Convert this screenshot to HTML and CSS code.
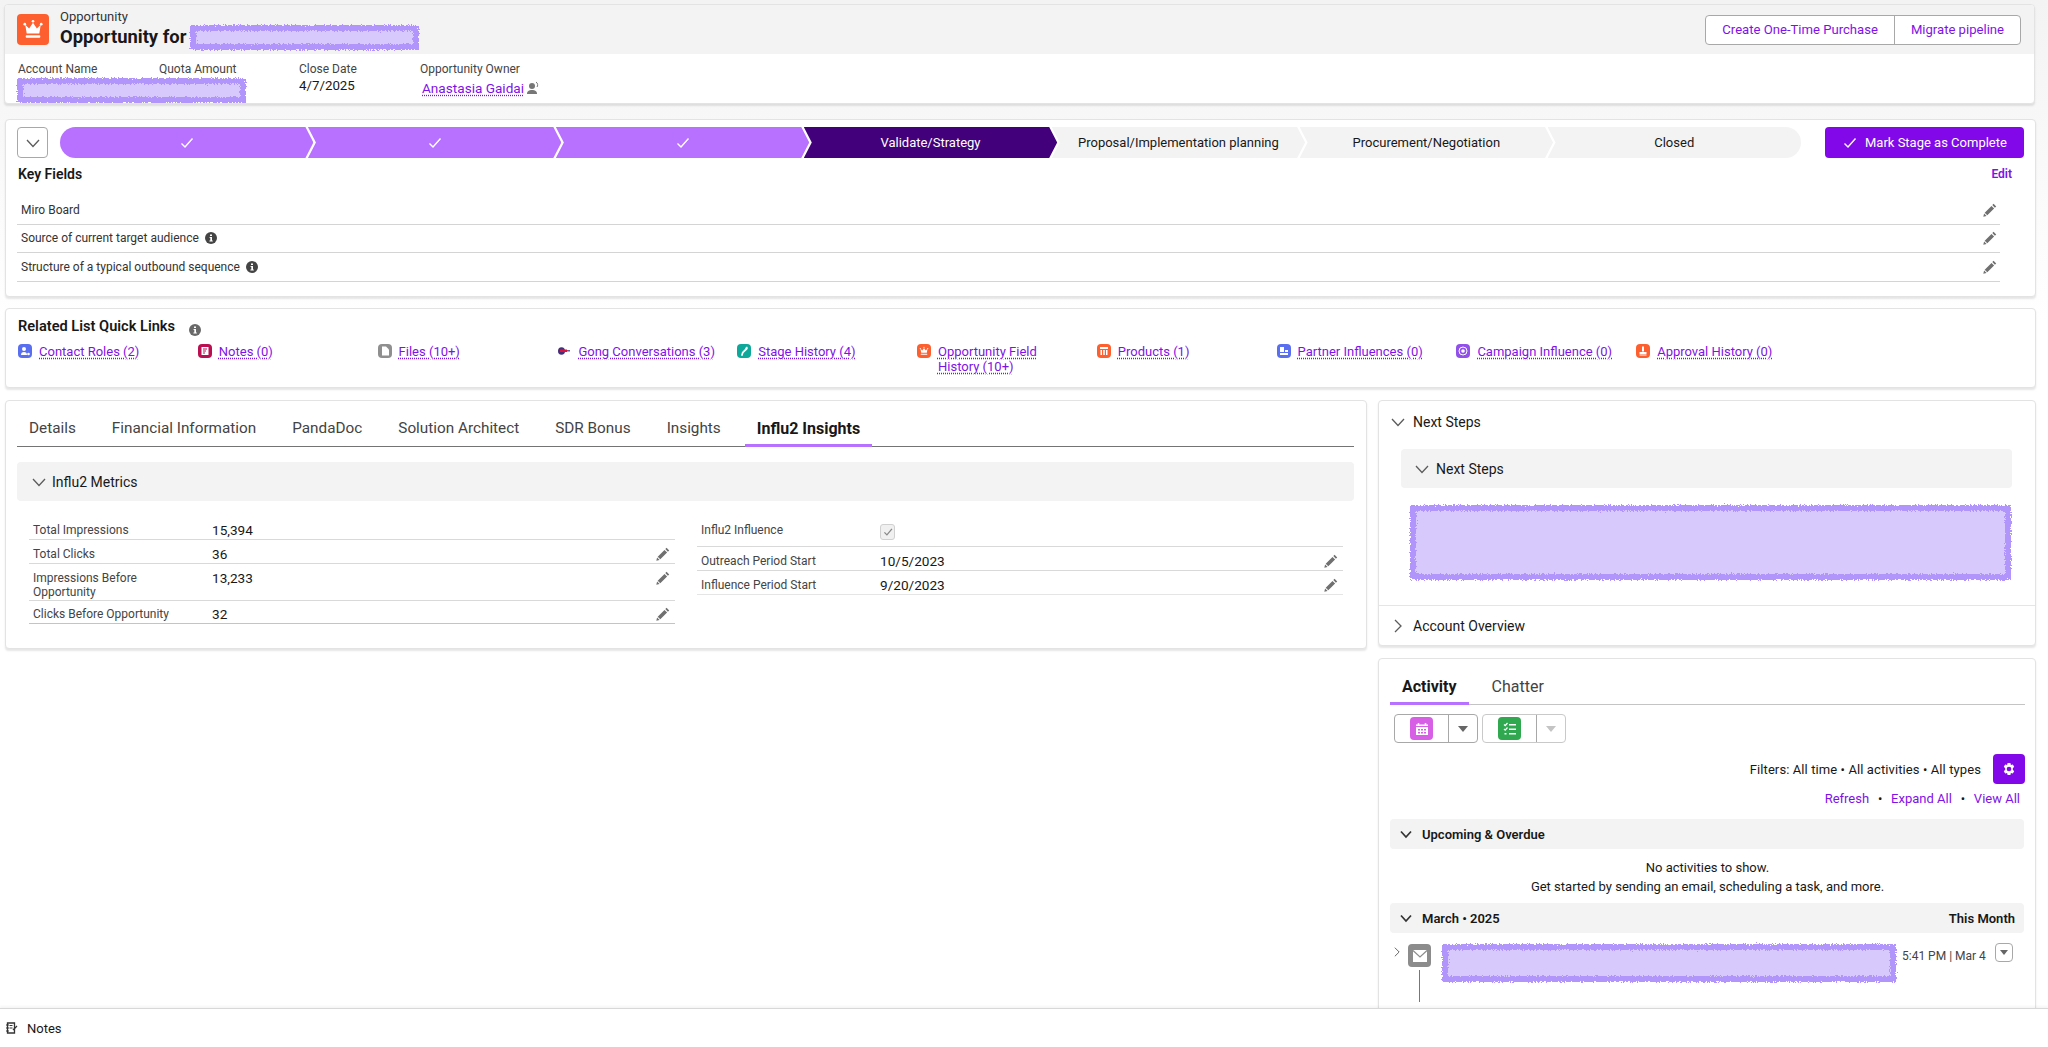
FILE: index.html
```html
<!DOCTYPE html>
<html lang="en">
<head>
  <meta charset="UTF-8">
  <title>Opportunity</title>
  <link rel="stylesheet" href="styles.css">
</head>
<body>
  <svg class="defs" width="0" height="0">
    <defs>
      <filter id="rough" x="-5%" y="-20%" width="110%" height="140%">
        <feTurbulence type="fractalNoise" baseFrequency="0.7" numOctaves="2" seed="4"/>
        <feDisplacementMap in="SourceGraphic" scale="5"/>
      </filter>
      <symbol id="pencil" viewBox="0 0 14 14">
        <path d="M10.6 .8l2.6 2.6-1.3 1.3-2.6-2.6zM8.5 2.9l2.6 2.6-6.8 6.8-2.6-2.6zM1.1 10.4l2.5 2.5-3.3.8z" fill="#707070"/>
      </symbol>
      <symbol id="chev-down" viewBox="0 0 14 14">
        <path d="M1 4l6 6.5L13 4" fill="none" stroke="#5c5c5c" stroke-width="1.3"/>
      </symbol>
      <symbol id="chev-bold" viewBox="0 0 14 14">
        <path d="M2 4.5l5 5.5 5-5.5" fill="none" stroke="#333" stroke-width="1.7"/>
      </symbol>
      <symbol id="chev-right" viewBox="0 0 14 14">
        <path d="M4 1l6 6-6 6" fill="none" stroke="#5c5c5c" stroke-width="1.3"/>
      </symbol>
      <symbol id="check" viewBox="0 0 14 14">
        <path d="M1.5 7.5l3.5 3.5 7.5-8.5" fill="none" stroke="#fff" stroke-width="1.4"/>
      </symbol>
      <symbol id="info" viewBox="0 0 12 12">
        <circle cx="6" cy="6" r="6" fill="#444"/>
        <path d="M5 2.5h2v1.6H5zM4.6 5h2.4v3.4h.8v1H4.4v-1h.9V6h-.7z" fill="#fff"/>
      </symbol>
      <symbol id="crown" viewBox="0 0 32 32">
        <path d="M8 11l4 4 4-6 4 6 4-4-1.5 9h-13z" fill="#fff"/>
        <circle cx="7.5" cy="10.5" r="1.4" fill="#fff"/>
        <circle cx="16" cy="7.5" r="1.4" fill="#fff"/>
        <circle cx="24.5" cy="10.5" r="1.4" fill="#fff"/>
        <rect x="8.5" y="22" width="15" height="2.6" rx=".8" fill="#fff"/>
      </symbol>
    </defs>
  </svg>

  <main class="page">
    <section class="card record-head">
      <div class="record-top">
        <span class="record-icon"><svg width="32" height="31"><use href="#crown"/></svg></span>
        <div class="record-title">
          <div class="record-type">Opportunity</div>
          <h1>Opportunity for <span class="redact redact-title"></span></h1>
        </div>
        <div class="btn-group">
          <a class="btn">Create One-Time Purchase</a>
          <a class="btn">Migrate pipeline</a>
        </div>
      </div>
      <div class="highlights">
        <div class="hl hl-account">
          <div class="hl-label">Account Name</div>
          <div class="redact redact-account"></div>
        </div>
        <div class="hl hl-quota"><div class="hl-label">Quota Amount</div></div>
        <div class="hl hl-close">
          <div class="hl-label">Close Date</div>
          <div class="hl-value">4/7/2025</div>
        </div>
        <div class="hl">
          <div class="hl-label">Opportunity Owner</div>
          <div class="hl-owner">
            <a class="link">Anastasia Gaidai</a>
            <svg width="13" height="14" viewBox="0 0 13 14"><circle cx="5" cy="5" r="3" fill="#777"/><path d="M0 13c0-3 2-4 5-4s5 1 5 4z" fill="#777"/><path d="M9 1c2 1 2 4 1 5" fill="none" stroke="#777"/></svg>
          </div>
        </div>
      </div>
    </section>

    <section class="card key-card">
      <div class="path-row">
        <button class="path-toggle"><svg width="14" height="14"><use href="#chev-down"/></svg></button>
        <ol class="path">
          <li class="step done"><svg width="14" height="14"><use href="#check"/></svg></li>
          <li class="step done"><svg width="14" height="14"><use href="#check"/></svg></li>
          <li class="step done"><svg width="14" height="14"><use href="#check"/></svg></li>
          <li class="step current">Validate/Strategy</li>
          <li class="step">Proposal/Implementation planning</li>
          <li class="step">Procurement/Negotiation</li>
          <li class="step">Closed</li>
        </ol>
        <button class="btn-complete"><svg width="14" height="14"><use href="#check"/></svg>Mark Stage as Complete</button>
      </div>
      <div class="key-head">
        <h2>Key Fields</h2>
        <a class="key-edit">Edit</a>
      </div>
      <div class="key-list">
        <div class="key-row"><span>Miro Board</span><svg class="pen" width="14" height="14"><use href="#pencil"/></svg></div>
        <div class="key-row"><span>Source of current target audience</span><svg class="tip" width="12" height="12"><use href="#info"/></svg><svg class="pen" width="14" height="14"><use href="#pencil"/></svg></div>
        <div class="key-row"><span>Structure of a typical outbound sequence</span><svg class="tip" width="12" height="12"><use href="#info"/></svg><svg class="pen" width="14" height="14"><use href="#pencil"/></svg></div>
      </div>
    </section>

    <section class="card quick-card">
      <h2>Related List Quick Links <svg class="quick-info" width="12" height="12"><use href="#info"/></svg></h2>
      <ul class="quick-links">
        <li><span class="qi qi-contact"><svg viewBox="0 0 14 14"><circle cx="6" cy="5" r="2" fill="#fff"/><path d="M3 11c0-2 1-3 3-3s3 1 3 3z" fill="#fff"/><circle cx="10.500" cy="10" r="1.300" fill="#fff"/></svg></span><a class="link">Contact Roles (2)</a></li>
        <li><span class="qi qi-notes"><svg viewBox="0 0 14 14"><rect x="3.500" y="3" width="7" height="8" fill="#fff"/><path d="M5 5h4M5 7h3M5 9h2" stroke="#ba0f50"/></svg></span><a class="link">Notes (0)</a></li>
        <li><span class="qi qi-files"><svg viewBox="0 0 14 14"><path d="M4 2.500h4l3 3V11.500H4z" fill="#fff"/></svg></span><a class="link">Files (10+)</a></li>
        <li><span class="qi qi-gong"><svg viewBox="0 0 14 14"><ellipse cx="4.500" cy="7" rx="3.500" ry="3.800" fill="#43307a"/><rect x="3" y="5.500" width="7" height="2.500" fill="#d8123c"/><rect x="10" y="6" width="3" height="1.500" fill="#6a5aa0"/></svg></span><a class="link">Gong Conversations (3)</a></li>
        <li><span class="qi qi-stage"><svg viewBox="0 0 14 14"><path d="M10 2.500c1 1 1 2.500 0 3.200L6.500 9l-1 3-1.500-.5L5 8l3-3c.3-1 .8-2 2-2.500z" fill="#fff"/></svg></span><a class="link">Stage History (4)</a></li>
        <li><span class="qi qi-orange"><svg viewBox="0 0 32 32"><use href="#crown"/></svg></span><a class="link">Opportunity Field History (10+)</a></li>
        <li><span class="qi qi-orange"><svg viewBox="0 0 14 14"><path d="M3 3h8v2H3zM3.500 6h1.500v5H3.500zM6.200 6h1.600v5H6.200zM9 6h1.500v5H9z" fill="#fff"/></svg></span><a class="link">Products (1)</a></li>
        <li><span class="qi qi-partner"><svg viewBox="0 0 14 14"><rect x="3" y="3" width="4" height="5" fill="#fff"/><rect x="3" y="9" width="8" height="2" fill="#fff"/><rect x="8" y="6" width="3" height="2" fill="#fff"/></svg></span><a class="link">Partner Influences (0)</a></li>
        <li><span class="qi qi-campaign"><svg viewBox="0 0 14 14"><circle cx="7" cy="7" r="4" fill="none" stroke="#fff"/><circle cx="7" cy="7" r="1.800" fill="#fff"/></svg></span><a class="link">Campaign Influence (0)</a></li>
        <li><span class="qi qi-orange"><svg viewBox="0 0 14 14"><rect x="6" y="2.500" width="2" height="5" fill="#fff"/><path d="M3.500 8h7v2h-7z" fill="#fff"/><rect x="3.500" y="10.500" width="7" height="1" fill="#fff"/></svg></span><a class="link">Approval History (0)</a></li>
      </ul>
    </section>

    <div class="columns">
      <section class="card detail-card">
        <ul class="tabs">
          <li class="tab">Details</li>
          <li class="tab">Financial Information</li>
          <li class="tab">PandaDoc</li>
          <li class="tab">Solution Architect</li>
          <li class="tab">SDR Bonus</li>
          <li class="tab">Insights</li>
          <li class="tab active">Influ2 Insights</li>
        </ul>
        <div class="section-bar"><svg width="14" height="14"><use href="#chev-down"/></svg>Influ2 Metrics</div>
        <div class="fields">
          <div class="field-col">
            <div class="field"><span class="f-label">Total Impressions</span><span class="f-value">15,394</span></div>
            <div class="field"><span class="f-label">Total Clicks</span><span class="f-value">36</span><svg class="pen" width="14" height="14"><use href="#pencil"/></svg></div>
            <div class="field"><span class="f-label">Impressions Before Opportunity</span><span class="f-value">13,233</span><svg class="pen" width="14" height="14"><use href="#pencil"/></svg></div>
            <div class="field last"><span class="f-label">Clicks Before Opportunity</span><span class="f-value">32</span><svg class="pen" width="14" height="14"><use href="#pencil"/></svg></div>
          </div>
          <div class="field-col">
            <div class="field field-check"><span class="f-label">Influ2 Influence</span><span class="checkbox"><svg width="10" height="10" viewBox="0 0 14 14"><path d="M2 7.500l3.500 3.500 7-8.500" fill="none" stroke="#888" stroke-width="1.800"/></svg></span></div>
            <div class="field"><span class="f-label">Outreach Period Start</span><span class="f-value">10/5/2023</span><svg class="pen" width="14" height="14"><use href="#pencil"/></svg></div>
            <div class="field light"><span class="f-label">Influence Period Start</span><span class="f-value">9/20/2023</span><svg class="pen" width="14" height="14"><use href="#pencil"/></svg></div>
          </div>
        </div>
      </section>

      <div class="side">
        <section class="card steps-card">
          <div class="acc-head"><svg width="14" height="14"><use href="#chev-down"/></svg>Next Steps</div>
          <div class="section-bar inner"><svg width="14" height="14"><use href="#chev-down"/></svg>Next Steps</div>
          <div class="redact redact-steps"></div>
          <div class="acc-head acc-last"><svg width="14" height="14"><use href="#chev-right"/></svg>Account Overview</div>
        </section>

        <section class="card activity-card">
          <ul class="tabs">
            <li class="tab">Activity</li>
            <li class="tab">Chatter</li>
          </ul>
          <div class="publisher">
            <div class="pub-group">
              <span class="pub-main"><span class="pub-icon pub-event"><svg width="16" height="16" viewBox="0 0 16 16"><path d="M2 5V3.500h12V5zM2 6h12v8H2z" fill="#fff"/><path d="M4.500 2v2M11.500 2v2" stroke="#fff" stroke-width="1.500"/><path d="M4 8h2v1.500H4zM7 8h2v1.500H7zM10 8h2v1.500h-2zM4 11h2v1.500H4zM7 11h2v1.500H7zM10 11h2v1.500h-2z" fill="#d75fe6"/></svg></span></span>
              <span class="pub-caret"></span>
            </div>
            <div class="pub-group pub-off">
              <span class="pub-main"><span class="pub-icon pub-task"><svg width="16" height="16" viewBox="0 0 16 16"><path d="M2 3.500l1.200 1.200L5.500 2M2 8l1.200 1.200L5.500 6.500" fill="none" stroke="#fff" stroke-width="1.200"/><path d="M7 3h7v1.500H7zM7 7.500h7V9H7zM7 12h7v1.500H7zM2.500 12h2v1.500h-2z" fill="#fff"/></svg></span></span>
              <span class="pub-caret"></span>
            </div>
          </div>
          <div class="filters">
            <span>Filters: All time • All activities • All types</span>
            <button class="gear"><svg width="14" height="14" viewBox="0 0 14 14"><path d="M5.600 1h2.800l.5 1.900 1.900-.5 1.400 2.400-1.400 1.400v1.600l1.400 1.400-1.400 2.400-1.900-.5L8.400 13H5.600l-.5-1.900-1.900.5-1.400-2.400 1.400-1.400V6.200L1.800 4.800l1.400-2.400 1.900.5z" fill="#fff"/><circle cx="7" cy="7" r="2.300" fill="#8208ea"/></svg></button>
          </div>
          <div class="activity-links">
            <a>Refresh</a><span class="sep">•</span><a>Expand All</a><span class="sep">•</span><a>View All</a>
          </div>
          <div class="group-bar"><svg width="14" height="14"><use href="#chev-bold"/></svg>Upcoming &amp; Overdue</div>
          <div class="empty">
            <p>No activities to show.</p>
            <p>Get started by sending an email, scheduling a task, and more.</p>
          </div>
          <div class="group-bar"><svg width="14" height="14"><use href="#chev-bold"/></svg>March • 2025<span class="group-right">This Month</span></div>
          <div class="timeline">
            <svg class="tl-chev" width="10" height="14"><use href="#chev-right"/></svg>
            <div class="tl-rail">
              <span class="tl-icon"><svg width="16" height="14" viewBox="0 0 16 14"><path d="M1 1h14v12H1z" fill="#fff"/><path d="M1 1.500l7 6.500 7-6.500" fill="none" stroke="#8c8c8c" stroke-width="1.200"/></svg></span>
              <span class="tl-line"></span>
            </div>
            <div class="redact redact-mail"></div>
            <span class="tl-time">5:41 PM | Mar 4</span>
            <span class="tl-menu"><span class="pub-caret-mark"></span></span>
          </div>
        </section>
      </div>
    </div>
  </main>

  <footer class="dock">
    <svg width="12" height="12" viewBox="0 0 12 12"><path d="M1.500 1h7v10h-7z" fill="none" stroke="#333" stroke-width="1.300"/><path d="M0 3h3M0 6h3M0 9h3M3.500 3.500h3M3.500 6h3" stroke="#333"/><path d="M7 8l4-4" stroke="#333" stroke-width="1.300"/></svg>
    <span>Notes</span>
  </footer>
</body>
</html>
```

FILE: styles.css
```css
* {
  box-sizing: border-box;
}

html,
body {
  margin: 0;
  height: 100%;
  overflow: hidden;
}

body {
  display: flex;
  flex-direction: column;
  font-family: Roboto, "Liberation Sans", sans-serif;
  font-size: 13px;
  color: #181818;
  background: linear-gradient(#f3f3f3 0, #fff 320px);
}

h1,
h2,
p,
ul,
ol {
  margin: 0;
  padding: 0;
  list-style: none;
}

button {
  font-family: inherit;
  cursor: pointer;
}

.defs {
  position: absolute;
}

.page {
  flex: 1;
  overflow: hidden;
  padding: 4px 12px 0 5px;
}

.card {
  background: #fff;
  border: 1px solid #e3e3e3;
  border-radius: 4px;
  box-shadow: 0 2px 2px rgba(0, 0, 0, 0.1);
}

.link {
  color: #7f12e6;
  text-decoration: underline dotted;
  text-underline-offset: 2px;
}

.redact {
  background: #d7c9fc;
  border: 6px solid #b195fb;
  filter: url(#rough);
}

.pen {
  flex: none;
  margin-left: auto;
}

/* record header */
.record-head {
  margin: 0 1px 0 -1px;
  height: 100px;
  overflow: hidden;
}

.record-top {
  display: flex;
  align-items: center;
  height: 49px;
  padding: 0 13px 0 12px;
  background: #f3f3f3;
}

.record-icon {
  display: block;
  width: 32px;
  height: 31px;
  margin-right: 11px;
  border-radius: 4px;
  background: #fd5f2e;
}

.record-title {
  margin-top: -1px;
}

.record-type {
  font-size: 13px;
  line-height: 16px;
  color: #333;
}

.record-title h1 {
  display: flex;
  align-items: center;
  gap: 4px;
  font-size: 18.400px;
  font-weight: 700;
  line-height: 20px;
}

.redact-title {
  display: block;
  width: 229px;
  height: 25px;
}

.btn-group {
  display: flex;
  margin-left: auto;
  height: 30px;
  background: #fff;
  border: 1px solid #a8a8a8;
  border-radius: 4px;
}

.btn {
  padding: 0 16px;
  font-size: 13.100px;
  line-height: 28px;
  color: #7f12e6;
}

.btn + .btn {
  border-left: 1px solid #a8a8a8;
}

.highlights {
  display: flex;
  padding: 8px 0 0 13px;
}

.hl-account {
  width: 141px;
}

.hl-quota {
  width: 140px;
}

.hl-close {
  width: 121px;
}

.hl-label {
  font-size: 12px;
  line-height: 14px;
  color: #444;
}

.hl-value {
  margin-top: 1px;
  font-size: 13.300px;
  line-height: 17px;
}

.redact-account {
  position: relative;
  width: 229px;
  height: 25px;
  margin-top: 2px;
  margin-left: -1px;
}

.hl-owner {
  display: flex;
  align-items: center;
  gap: 3px;
  margin: 3px 0 0 2px;
  font-size: 13.600px;
  line-height: 18px;
}

/* path and key fields */
.key-card {
  margin-top: 15px;
  height: 178px;
  padding: 7px 11px 0;
}

.path-row {
  display: flex;
  align-items: center;
  height: 31px;
}

.path-toggle {
  display: flex;
  align-items: center;
  justify-content: center;
  flex: none;
  width: 31px;
  height: 31px;
  padding: 0;
  margin-right: 12px;
  background: #fff;
  border: 1px solid #a8a8a8;
  border-radius: 4px;
}

.path {
  display: flex;
  flex: none;
  width: 1741px;
  height: 31px;
}

.step {
  display: flex;
  align-items: center;
  justify-content: center;
  flex: 1;
  margin-left: -5.5px;
  background: #f3f3f3;
  clip-path: polygon(0 0, calc(100% - 8px) 0, 100% 50%, calc(100% - 8px) 100%, 0 100%, 8px 50%);
}

.step:first-child {
  margin-left: 0;
  border-radius: 16px 0 0 16px;
  clip-path: polygon(0 0, calc(100% - 8px) 0, 100% 50%, calc(100% - 8px) 100%, 0 100%);
}

.step:last-child {
  border-radius: 0 16px 16px 0;
  clip-path: polygon(0 0, 100% 0, 100% 100%, 0 100%, 8px 50%);
}

.step.done {
  background: #b870ff;
}

.step.current {
  background: #42007b;
  color: #fff;
}

.btn-complete {
  display: flex;
  align-items: center;
  gap: 8px;
  flex: none;
  width: 199px;
  height: 31px;
  margin-left: 24px;
  padding: 0 0 0 18px;
  color: #fff;
  font-size: 13px;
  white-space: nowrap;
  background: #8208ea;
  border: none;
  border-radius: 4px;
}

.key-head {
  display: flex;
  justify-content: space-between;
  padding: 8px 12px 0 1px;
  height: 38px;
}

.key-head h2,
.quick-card h2 {
  font-size: 14px;
  font-weight: 600;
  line-height: 16px;
}

.quick-card h2 {
  font-size: 14.600px;
}

.key-edit {
  font-size: 12px;
  font-weight: 600;
  line-height: 16px;
  color: #7f12e6;
}

.key-list {
  width: 1983px;
}

.key-row {
  display: flex;
  align-items: center;
  gap: 6px;
  height: 28.500px;
  padding: 0 2px 0 4px;
  font-size: 12px;
  color: #333;
  border-bottom: 1px solid #d4d4d4;
}

.key-row .pen {
  margin-right: 1px;
}

.key-row .tip,
.quick-info {
  flex: none;
}

/* quick links */
.quick-card {
  margin-top: 11px;
  height: 80px;
  padding: 9px 12px 0;
}

.quick-info {
  margin: 0 0 -5px 10px;
  opacity: 0.8;
}

.quick-links {
  display: grid;
  grid-template-columns: repeat(10, 179.800px);
  margin-top: 10px;
}

.quick-links li {
  display: flex;
  gap: 7px;
  line-height: 15px;
  padding-right: 20px;
}

.qi {
  display: block;
  flex: none;
  width: 14px;
  height: 14px;
  border-radius: 4px;
}

.qi svg {
  display: block;
  width: 14px;
  height: 14px;
}

.qi-contact { background: #5a6ff0; }
.qi-notes { background: #ba0f50; }
.qi-files { background: #8f8f8f; }
.qi-stage { background: #0ea89a; }
.qi-orange { background: #fd5f2e; }
.qi-partner { background: #5a6ff0; }
.qi-campaign { background: #9050e9; }

/* two columns */
.columns {
  display: grid;
  grid-template-columns: 1362px 658px;
  gap: 11px;
  align-items: start;
  margin-top: 12px;
}

.detail-card {
  height: 249px;
  padding: 9px 12px 0 11px;
}

.tabs {
  display: flex;
  gap: 11px;
  height: 37px;
  border-bottom: 1px solid #747474;
}

.detail-card .tabs {
  gap: 12px;
}

.tab {
  height: 37px;
  padding: 0 12px;
  font-size: 16px;
  line-height: 37px;
  color: #444;
}

.detail-card .tab {
  font-size: 15.300px;
}

.detail-card .tab.active,
.activity-card .tab:first-child {
  font-size: 16px;
  font-weight: 700;
  color: #181818;
  box-shadow: inset 0 -3px 0 #b870ff;
}

.section-bar {
  display: flex;
  align-items: center;
  gap: 6px;
  height: 39px;
  margin-top: 15px;
  padding-left: 15px;
  font-size: 14px;
  background: #f3f3f3;
  border-radius: 4px;
}

.fields {
  display: grid;
  grid-template-columns: 646px 646px;
  gap: 22px;
  margin: 15px 0 0 12px;
}

.field {
  display: flex;
  align-items: flex-start;
  padding: 6px 4px 1px;
  border-bottom: 1px solid #d9d9d9;
}

.field.last {
  margin-top: -1px;
  border-bottom-color: #c4c4c4;
}

.field.light {
  border-bottom-color: #e5e5e5;
}

.f-label {
  flex: none;
  width: 179px;
  padding: 1px 30px 0 0;
  font-size: 12px;
  line-height: 14px;
  color: #444;
}

.f-value {
  font-size: 13.600px;
  line-height: 16px;
}

.field .pen {
  margin-top: 1px;
  margin-right: 1px;
}

.field-check {
  height: 31px;
}

.checkbox {
  display: flex;
  align-items: center;
  justify-content: center;
  width: 15px;
  height: 16px;
  margin-top: 2px;
  background: #f0f0f0;
  border: 1px solid #d0d0d0;
  border-radius: 3px;
}

/* side panel */
.side {
  display: flex;
  flex-direction: column;
  gap: 12px;
}

.steps-card {
  height: 246px;
}

.acc-head {
  display: flex;
  align-items: center;
  gap: 8px;
  height: 41px;
  padding-left: 12px;
  font-size: 14px;
}

.acc-last {
  height: 40px;
  border-top: 1px solid #e5e5e5;
}

.section-bar.inner {
  gap: 7px;
  margin: 7px 23px 0 22px;
  padding-left: 14px;
}

.redact-steps {
  width: 601px;
  height: 75px;
  margin: 17px 0 25px 31px;
}

.activity-card {
  height: 400px;
  padding: 9px 10px 0 11px;
}

.activity-card .tabs {
  border-bottom-color: #c4c4c4;
}

.publisher {
  display: flex;
  gap: 4px;
  margin: 9px 0 0 4px;
}

.pub-group {
  display: flex;
  width: 84px;
  height: 29px;
  border: 1px solid #a8a8a8;
  border-radius: 4px;
}

.pub-off {
  border-color: #c9c9c9;
}

.pub-main {
  display: flex;
  align-items: center;
  justify-content: center;
  width: 54px;
  border-right: 1px solid #a8a8a8;
}

.pub-icon {
  display: flex;
  align-items: center;
  justify-content: center;
  width: 23px;
  height: 23px;
  border-radius: 4px;
}

.pub-event { background: #d75fe6; }
.pub-task { background: #2fa84f; }

.pub-caret {
  width: 0;
  height: 0;
  margin: 11px 0 0 9px;
  border: 5px solid transparent;
  border-top: 6px solid #666;
}

.pub-off .pub-caret {
  border-top-color: #c4c4c4;
}

.filters {
  display: flex;
  align-items: center;
  justify-content: flex-end;
  gap: 12px;
  height: 30px;
  margin-top: 11px;
  letter-spacing: 0.1px;
}

.gear {
  display: flex;
  align-items: center;
  justify-content: center;
  width: 32px;
  height: 30px;
  padding: 0;
  background: #8208ea;
  border: none;
  border-radius: 4px;
}

.activity-links {
  display: flex;
  justify-content: flex-end;
  margin-top: 7px;
  padding-right: 5px;
  line-height: 16px;
  color: #7f12e6;
}

.sep {
  width: 22px;
  text-align: center;
  color: #181818;
}

.group-bar {
  display: flex;
  align-items: center;
  gap: 9px;
  height: 30px;
  margin: 12px 1px 0 0;
  padding: 0 9px;
  font-weight: 600;
  background: #f3f3f3;
  border-radius: 4px;
}

.group-right {
  margin-left: auto;
}

.empty {
  height: 54px;
  padding-top: 9px;
  line-height: 19px;
  text-align: center;
}

.empty + .group-bar {
  margin-top: 0;
}

.timeline {
  display: flex;
  align-items: flex-start;
  margin-top: 10px;
}

.tl-chev {
  margin: 2px 0 0 2px;
}

.tl-rail {
  display: flex;
  flex-direction: column;
  align-items: center;
  margin: 1px 0 0 6px;
}

.tl-icon {
  display: flex;
  align-items: center;
  justify-content: center;
  width: 23px;
  height: 23px;
  background: #8c8c8c;
  border-radius: 4px;
}

.tl-line {
  width: 1px;
  height: 32px;
  margin-top: 3px;
  background: #777;
}

.redact-mail {
  width: 454px;
  height: 38px;
  margin: 1px 0 0 11px;
}

.tl-time {
  width: 93px;
  margin: 6px 0 0 6px;
  font-size: 12px;
  line-height: 14px;
  color: #444;
  white-space: nowrap;
}

.tl-menu {
  display: flex;
  align-items: center;
  justify-content: center;
  width: 18px;
  height: 19px;
  background: #fff;
  border: 1px solid #a8a8a8;
  border-radius: 4px;
}

.pub-caret-mark {
  margin-top: 4px;
  border: 4px solid transparent;
  border-top: 5px solid #666;
}

/* bottom dock */
.dock {
  display: flex;
  align-items: center;
  gap: 9px;
  flex: none;
  height: 39px;
  padding-left: 6px;
  background: #fff;
  border-top: 1px solid #d8d8d8;
  box-shadow: 0 -2px 2px rgba(0, 0, 0, 0.04);
  position: relative;
}
```
